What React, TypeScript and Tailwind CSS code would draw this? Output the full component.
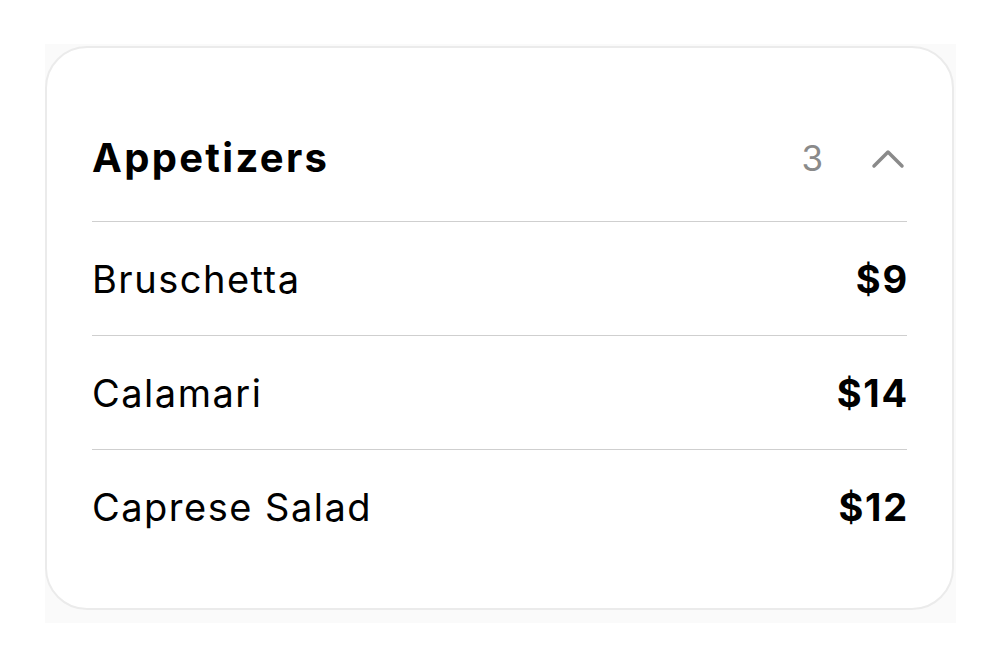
const items = [
  { name: 'Bruschetta', price: '$9' },
  { name: 'Calamari', price: '$14' },
  { name: 'Caprese Salad', price: '$12' },
];

export default function App() {
  return (
    <div className="min-h-screen bg-white pt-[44px] pl-[45px]" style={{ fontFamily: 'Inter, "Liberation Sans", sans-serif' }}>
      <div className="w-[911px] bg-[#fafafa] pt-[2px] pr-[2px] pb-[13px]">
        <div className="rounded-[42px] border-2 border-[#ebebeb] bg-white px-[45px] pb-[45px] text-black">
          <div className="flex items-center justify-between pt-[87px] pb-[40px]">
            <h2 className="text-[40px] font-bold leading-[46px] tracking-[2.3px]">Appetizers</h2>
            <div className="flex items-center gap-[48px] pr-[2px]">
              <span className="text-[35px] leading-[40px] text-[#8a8a8a]">3</span>
              <svg width="34" height="22" viewBox="0 0 34 22" fill="none" className="text-[#8a8a8a]">
                <path d="M3 19 L17 5 L31 19" stroke="currentColor" strokeWidth="3.5" strokeLinecap="round" strokeLinejoin="round" />
              </svg>
            </div>
          </div>
          {items.map((item) => (
            <div key={item.name} className="flex h-[114px] items-center justify-between border-t border-[#cfcfcf]">
              <span className="text-[38px] leading-[44px] tracking-[1.5px]">{item.name}</span>
              <span className="-mr-[2px] text-[38px] font-bold leading-[44px] tracking-[1.8px]">{item.price}</span>
            </div>
          ))}
        </div>
      </div>
    </div>
  );
}
